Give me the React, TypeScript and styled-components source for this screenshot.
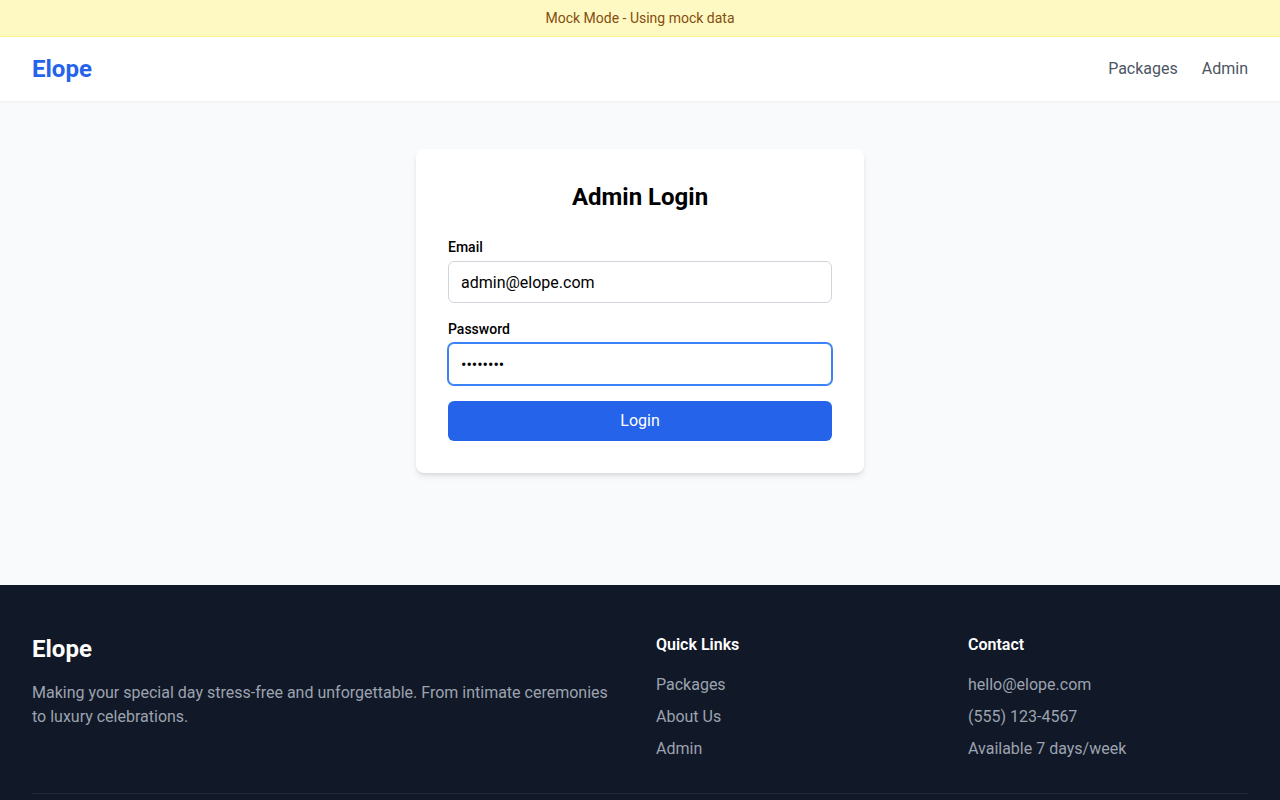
import { FC } from 'react'
import styled, { createGlobalStyle, css } from 'styled-components'

const Global = createGlobalStyle`
	* {
		box-sizing: border-box;
	}

	body {
		margin: 0;
		font-family: Roboto, Inter, "Liberation Sans", sans-serif;
		color: #111827;
		background: #f9fafb;
	}
`

const Banner = styled.div`
	background: #fef9c3;
	border-bottom: 1px solid #fef08a;
	color: #854d0e;
	font-size: 14px;
	line-height: 20px;
	padding: 8px 0;
	text-align: center;
`

const Header = styled.header`
	background: #fff;
	box-shadow: 0 1px 2px rgba(0, 0, 0, 0.05);
	position: relative;
`

const Bar = styled.div`
	height: 64px;
	padding: 0 32px;
	display: flex;
	align-items: center;
	justify-content: space-between;
`

const Logo = styled.a`
	font-size: 24px;
	line-height: 32px;
	font-weight: 700;
	color: #2563eb;
	text-decoration: none;
`

const Nav = styled.nav`
	display: flex;
	gap: 24px;

	a {
		color: #4b5563;
		font-size: 16px;
		line-height: 24px;
		text-decoration: none;
	}
`

const Main = styled.main`
	min-height: 484px;
	padding: 48px 16px;
	display: flex;
	justify-content: center;
	align-items: flex-start;
`

const Card = styled.form`
	width: 448px;
	background: #fff;
	border-radius: 8px;
	padding: 32px;
	box-shadow: 0 4px 6px -1px rgba(0, 0, 0, 0.1), 0 2px 4px -2px rgba(0, 0, 0, 0.1);
`

const Title = styled.h1`
	margin: 0 0 24px;
	font-size: 24px;
	line-height: 32px;
	font-weight: 700;
	text-align: center;
	color: #000;
`

const Field = styled.div`
	margin-bottom: 16px;
`

const Label = styled.label`
	display: block;
	font-size: 14px;
	line-height: 20px;
	font-weight: 500;
	color: #000;
	margin-bottom: 4px;
`

const Input = styled.input<{ $focused?: boolean }>`
	display: block;
	width: 100%;
	height: 42px;
	padding: 8px 12px;
	font: inherit;
	font-size: 16px;
	line-height: 24px;
	color: #000;
	border: 1px solid #d1d5db;
	border-radius: 6px;
	outline: none;

	${(p) => p.$focused && css`
		border-color: #3b82f6;
		box-shadow: 0 0 0 1px #3b82f6;
	`}
`

const Button = styled.button`
	display: block;
	width: 100%;
	height: 40px;
	border: none;
	border-radius: 6px;
	background: #2563eb;
	color: #fff;
	font: inherit;
	font-size: 16px;
	line-height: 24px;
	cursor: pointer;
`

const Footer = styled.footer`
	background: #111827;
	color: #fff;
	padding: 48px 32px 0;
`

const Grid = styled.div`
	display: grid;
	grid-template-columns: repeat(4, 1fr);
	gap: 32px;
`

const Brand = styled.div`
	grid-column: span 2;

	h2 {
		margin: 0 0 16px;
		font-size: 24px;
		line-height: 32px;
		font-weight: 700;
	}

	p {
		margin: 0;
		color: #9ca3af;
		font-size: 16px;
		line-height: 24px;
	}
`

const Column = styled.div`
	h3 {
		margin: 0 0 16px;
		font-size: 16px;
		line-height: 24px;
		font-weight: 600;
	}

	ul {
		list-style: none;
		margin: 0;
		padding: 0;
		display: flex;
		flex-direction: column;
		gap: 8px;
	}

	li, a {
		color: #9ca3af;
		font-size: 16px;
		line-height: 24px;
		text-decoration: none;
	}
`

const Bottom = styled.div`
	margin-top: 32px;
	border-top: 1px solid #1f2937;
	height: 40px;
`

const App: FC = () => {
	return (
		<>
			<Global />
			<Banner>Mock Mode - Using mock data</Banner>
			<Header>
				<Bar>
					<Logo href="#">Elope</Logo>
					<Nav>
						<a href="#">Packages</a>
						<a href="#">Admin</a>
					</Nav>
				</Bar>
			</Header>

			<Main>
				<Card onSubmit={(e) => e.preventDefault()}>
					<Title>Admin Login</Title>
					<Field>
						<Label htmlFor="email">Email</Label>
						<Input id="email" type="email" defaultValue="admin@elope.com" />
					</Field>
					<Field>
						<Label htmlFor="password">Password</Label>
						<Input id="password" type="password" defaultValue="password" $focused autoFocus />
					</Field>
					<Button type="submit">Login</Button>
				</Card>
			</Main>

			<Footer>
				<Grid>
					<Brand>
						<h2>Elope</h2>
						<p>Making your special day stress-free and unforgettable. From intimate ceremonies to luxury celebrations.</p>
					</Brand>
					<Column>
						<h3>Quick Links</h3>
						<ul>
							<li><a href="#">Packages</a></li>
							<li><a href="#">About Us</a></li>
							<li><a href="#">Admin</a></li>
						</ul>
					</Column>
					<Column>
						<h3>Contact</h3>
						<ul>
							<li>hello@elope.com</li>
							<li>(555) 123-4567</li>
							<li>Available 7 days/week</li>
						</ul>
					</Column>
				</Grid>
				<Bottom />
			</Footer>
		</>
	)
}

export default App
